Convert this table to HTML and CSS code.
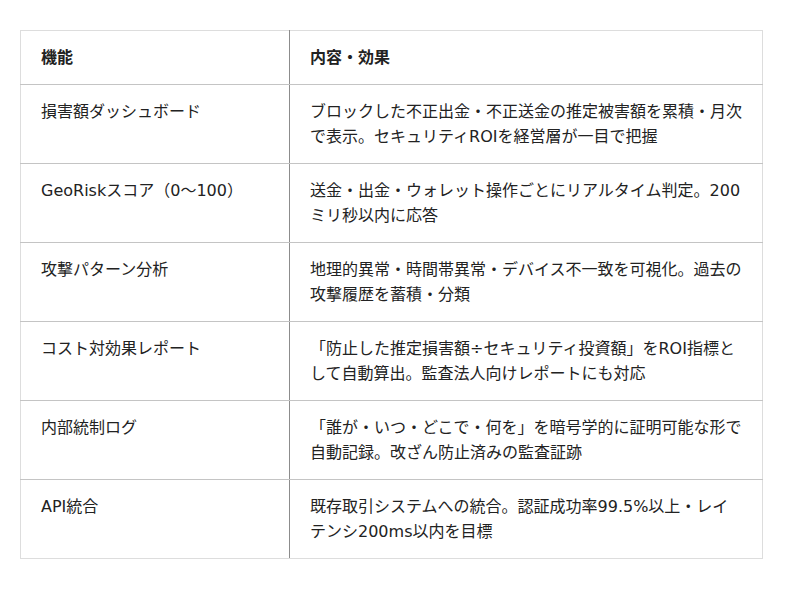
FILE: index.html
```html
<!DOCTYPE html>
<html lang="ja">
<head>
<meta charset="utf-8">
<link rel="stylesheet" href="styles.css">
</head>
<body>
<table class="spec">
  <thead>
    <tr><th class="col-a">機能</th><th class="col-b">内容・効果</th></tr>
  </thead>
  <tbody>
    <tr><td class="col-a">損害額ダッシュボード</td><td class="col-b">ブロックした不正出金・不正送金の推定被害額を累積・月次で表示。セキュリティROIを経営層が一目で把握</td></tr>
    <tr><td class="col-a">GeoRiskスコア（0〜100）</td><td class="col-b">送金・出金・ウォレット操作ごとにリアルタイム判定。200ミリ秒以内に応答</td></tr>
    <tr><td class="col-a">攻撃パターン分析</td><td class="col-b">地理的異常・時間帯異常・デバイス不一致を可視化。過去の攻撃履歴を蓄積・分類</td></tr>
    <tr><td class="col-a">コスト対効果レポート</td><td class="col-b">「防止した推定損害額÷セキュリティ投資額」をROI指標として自動算出。監査法人向けレポートにも対応</td></tr>
    <tr><td class="col-a">内部統制ログ</td><td class="col-b">「誰が・いつ・どこで・何を」を暗号学的に証明可能な形で自動記録。改ざん防止済みの監査証跡</td></tr>
    <tr><td class="col-a">API統合</td><td class="col-b">既存取引システムへの統合。認証成功率99.5%以上・レイテンシ200ms以内を目標</td></tr>
  </tbody>
</table>
</body>
</html>
```
FILE: styles.css
```css
html, body {
  margin: 0;
  padding: 0;
  background: #ffffff;
}
body {
  padding: 30px 0 0 20px;
  font-family: "DejaVu Sans", "Noto Sans CJK JP", sans-serif;
  color: #222222;
}
.spec {
  border-collapse: collapse;
  width: 743px;
  table-layout: fixed;
  border: 1px solid #dddddd;
  font-size: 16px;
  line-height: 25px;
}
.spec th,
.spec td {
  text-align: left;
  vertical-align: top;
  padding: 14px 20px;
  border-top: 1px solid #c4c4c4;
  border-bottom: 1px solid #c4c4c4;
}
.spec th {
  font-weight: bold;
  font-size: 16px;
}
.spec .col-a {
  width: 228px;
  border-right: 1px solid #8c8c8c;
}
.spec .col-b {
  width: auto;
}
.spec thead th {
  border-top: 1px solid #dddddd;
}
.spec tbody tr:last-child td {
  border-bottom: 1px solid #dddddd;
}
```
